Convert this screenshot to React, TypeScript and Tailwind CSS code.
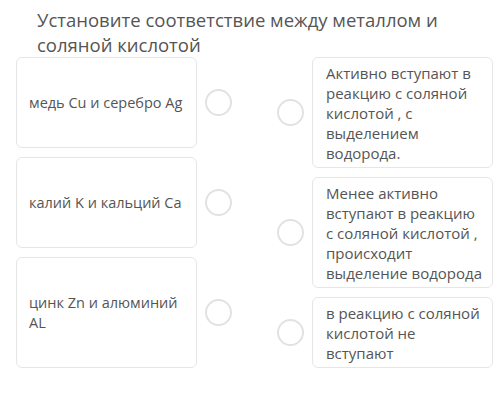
import React from "react";

const Circle = () => (
  <div className="w-[27px] h-[27px] rounded-full border-[2.5px] border-[#e2e2e2] bg-white shrink-0" />
);

export default function App() {
  const left = [
    { text: "медь Cu и серебро Ag", h: "h-[91px]" },
    { text: "калий K и кальций Ca", h: "h-[91px]" },
    { text: "цинк Zn и алюминий AL", h: "h-[111px]" },
  ];
  const right = [
    { text: "Активно вступают в реакцию с соляной кислотой , с выделением водорода.", h: "h-[111px]" },
    { text: "Менее активно вступают в реакцию с соляной кислотой , происходит выделение водорода", h: "h-[111px]" },
    { text: "в реакцию с соляной кислотой не вступают", h: "h-[71px]" },
  ];
  return (
    <div
      className="w-[500px] h-[400px] bg-white text-[#555] overflow-hidden"
      style={{ fontFamily: '"Open Sans", sans-serif' }}
    >
      <div className="pl-[37px] pt-[7px] pr-[40px] text-[18.5px] leading-[25px] text-[#555]">
        Установите соответствие между металлом и соляной кислотой
      </div>
      <div className="flex pl-[16px] mt-0">
        <div className="flex flex-col gap-[9px]">
          {left.map((r, i) => (
            <div key={i} className="flex items-center">
              <div
                className={`w-[181px] ${r.h} border border-[#e6e6e6] rounded-[6px] flex items-center pl-[12px] pr-[8px] text-[14.5px] leading-[20px]`}
              >
                {r.text}
              </div>
              <div className="ml-[8px]">
                <Circle />
              </div>
            </div>
          ))}
        </div>
        <div className="flex flex-col gap-[9px] ml-[45px]">
          {right.map((r, i) => (
            <div key={i} className="flex items-center">
              <Circle />
              <div
                className={`ml-[8px] w-[181px] ${r.h} border border-[#e6e6e6] rounded-[6px] flex items-center pl-[13px] pr-[8px] text-[15px] leading-[20px]`}
              >
                {r.text}
              </div>
            </div>
          ))}
        </div>
      </div>
    </div>
  );
}
